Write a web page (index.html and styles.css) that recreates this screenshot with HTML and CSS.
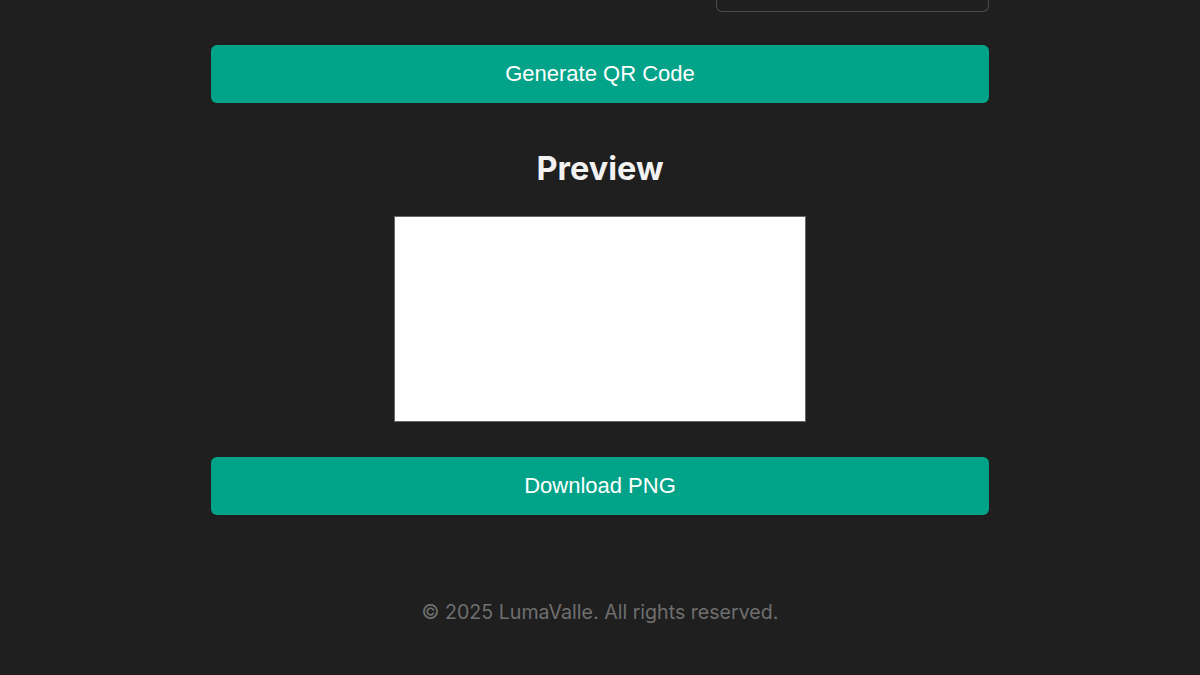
FILE: index.html
```html
<!DOCTYPE html>
<html>
<head>
<meta charset="utf-8">
<link rel="stylesheet" href="styles.css">
</head>
<body>
<main class="page">
  <div class="options-row">
    <div class="select-tail"></div>
  </div>
  <button class="btn btn-generate">Generate QR Code</button>
  <section class="preview">
    <h2 class="preview-title">Preview</h2>
    <div class="preview-box"></div>
  </section>
  <button class="btn btn-download">Download PNG</button>
  <footer class="footer">© 2025 LumaValle. All rights reserved.</footer>
</main>
</body>
</html>
```
FILE: styles.css
```css
html, body {
  margin: 0;
  padding: 0;
  background: #1f1f1f;
  height: 100%;
}
.page {
  width: 778px;
  margin: 0 auto;
  display: flex;
  flex-direction: column;
  font-family: Inter, "Liberation Sans", sans-serif;
}
.options-row {
  display: flex;
  justify-content: flex-end;
}
.select-tail {
  width: 271px;
  height: 11px;
  border: 1px solid #4a4a4a;
  border-top: none;
  border-radius: 0 0 6px 6px;
}
.btn {
  display: block;
  width: 100%;
  height: 58px;
  border: none;
  border-radius: 6px;
  background: #02a388;
  color: #ffffff;
  font-family: "Liberation Sans", Arial, sans-serif;
  font-size: 22px;
  cursor: pointer;
}
.btn-generate {
  margin-top: 33px;
}
.preview {
  display: flex;
  flex-direction: column;
  align-items: center;
}
.preview-title {
  margin: 45px 0 0;
  font-size: 32.5px;
  line-height: 42px;
  font-weight: 700;
  color: #f2f2f2;
}
.preview-box {
  margin-top: 26px;
  width: 410px;
  height: 204px;
  background: #ffffff;
  border: 1px solid #666666;
}
.btn-download {
  margin-top: 35px;
}
.footer {
  margin-top: 85px;
  text-align: center;
  font-size: 19.6px;
  color: #6f6f6f;
}
```
